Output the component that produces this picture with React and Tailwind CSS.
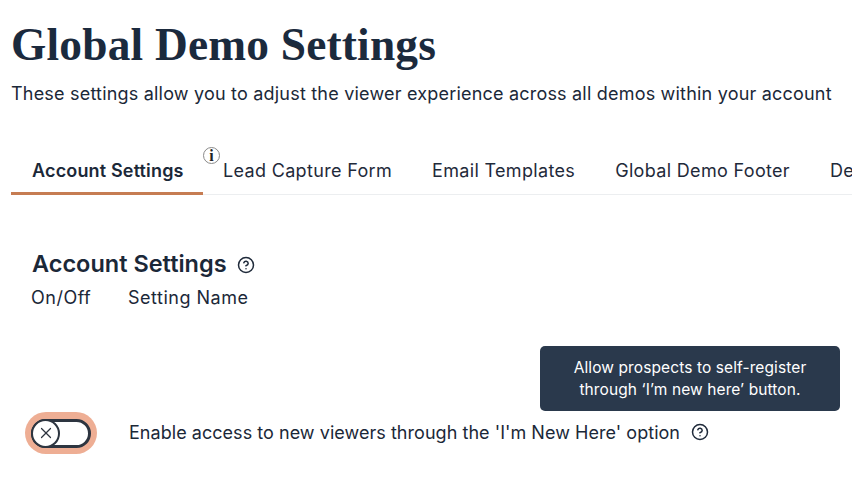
import { CircleHelp, X } from 'lucide-react';

const sans = "font-['Inter','Noto_Sans',sans-serif]";

const tabs = ['Lead Capture Form', 'Email Templates', 'Global Demo Footer', 'Demo'];

const Tab = ({ label }) => (
    <div className="px-5 h-[50px] flex items-center text-[18px] tracking-[0.33px] text-[#1f2a3a] whitespace-nowrap shrink-0">
        {label}
    </div>
);

export default function App() {
    return (
        <main className={`${sans} w-[852px] h-[486px] overflow-hidden bg-white text-[#1b2838] pl-[11px] pt-[16px]`}>
            <h1 className="font-['Liberation_Serif',serif] font-bold text-[45.4px] leading-[58px] tracking-[0.2px] text-[#1b2a3d] whitespace-nowrap">
                Global Demo Settings
            </h1>
            <p className="mt-[7px] text-[18px] leading-[26px] tracking-[0.2px] whitespace-nowrap">
                These settings allow you to adjust the viewer experience across all demos within your account
            </p>

            <div className="mt-[38px] h-[50px] flex shadow-[inset_0_-1px_0_#eceef0] w-[841px] overflow-hidden relative">
                <div className="w-[192px] shrink-0 h-[50px] pl-[21px] flex items-center pt-[3px] text-[18px] tracking-[0.16px] font-semibold border-b-[3px] border-[#c67c52] whitespace-nowrap">
                    Account Settings
                </div>
                <div className="absolute left-[192px] top-[2px] w-[17px] h-[17px] rounded-full border border-[#8a8a8a] flex items-center justify-center font-['Liberation_Serif',serif] font-bold text-[16px] leading-none text-[#222]">
                    i
                </div>
                <div className="flex">
                    {tabs.map((t) => <Tab key={t} label={t} />)}
                </div>
            </div>

            <div className="pl-[21px] mt-[50px] flex items-center gap-[10px] h-[36px]">
                <h2 className="text-[23.5px] font-semibold leading-[36px] pt-[1px]">Account Settings</h2>
                <CircleHelp size={18} strokeWidth={2} className="text-[#1f2a3a] mt-[3px]" />
            </div>
            <div className="mt-[2px] pl-[20px] flex h-[28px] items-center text-[18px] tracking-[0.5px]">
                <span className="w-[97px]">On/Off</span>
                <span>Setting Name</span>
            </div>

            <div className="relative">
                <div className="absolute left-[529px] top-[35px] w-[300px] h-[65px] rounded-[5px] bg-[#2a394c] text-white text-[15.5px] tracking-[0.1px] leading-[22px] flex flex-col items-center justify-center text-center">
                    <span>Allow prospects to self-register</span>
                    <span>through ‘I’m new here’ button.</span>
                </div>
            </div>

            <div className="mt-[101px] flex items-center h-[42px] ml-[14px]">
                <div className="w-[72px] h-[42px] rounded-full bg-[#eeae94] flex items-center justify-center shrink-0">
                    <div className="w-[60px] h-[29px] rounded-full border-[3px] border-[#2d3540] bg-white relative">
                        <div className="absolute left-[-3px] top-[-3px] w-[29px] h-[29px] rounded-full border-[2px] border-[#2d3540] bg-white flex items-center justify-center">
                            <X size={18} strokeWidth={1.6} className="text-[#2d3540]" />
                        </div>
                    </div>
                </div>
                <span className="ml-[32px] mb-[2px] text-[18px] tracking-[0.04px] whitespace-nowrap">Enable access to new viewers through the 'I'm New Here' option</span>
                <CircleHelp size={18} strokeWidth={2} className="ml-[11px] mb-[2px] text-[#1f2a3a]" />
            </div>
        </main>
    );
}
